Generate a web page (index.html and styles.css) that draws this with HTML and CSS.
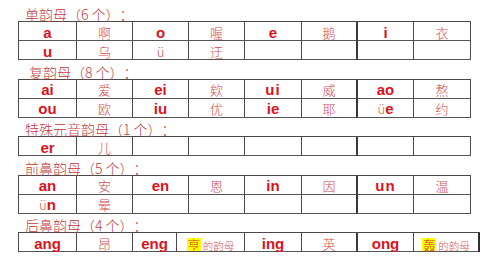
FILE: index.html
```html
<!DOCTYPE html>
<html lang="zh">
<head>
<meta charset="utf-8">
<title>韵母表</title>
<link rel="stylesheet" href="styles.css">
</head>
<body>
<div class="page">
  <section class="group">
    <h2 class="title">单韵母（6 个）：</h2>
    <div class="grid">
      <div class="c py">a</div><div class="c zh">啊</div><div class="c py">o</div><div class="c zh">喔</div><div class="c py">e</div><div class="c zh">鹅</div><div class="c py">i</div><div class="c zh">衣</div>
      <div class="c py">u</div><div class="c zh">乌</div><div class="c zh">ü</div><div class="c zh">迂</div><div class="c"></div><div class="c"></div><div class="c"></div><div class="c"></div>
    </div>
  </section>
  <section class="group">
    <h2 class="title title--shift">复韵母（8 个）：</h2>
    <div class="grid">
      <div class="c py">ai</div><div class="c zh">爱</div><div class="c py">ei</div><div class="c zh">欸</div><div class="c py py--wide">ui</div><div class="c zh">威</div><div class="c py">ao</div><div class="c zh">熬</div>
      <div class="c py">ou</div><div class="c zh">欧</div><div class="c py">iu</div><div class="c zh">优</div><div class="c py">ie</div><div class="c zh">耶</div><div class="c py"><span class="uu">ü</span>e</div><div class="c zh">约</div>
    </div>
  </section>
  <section class="group">
    <h2 class="title">特殊元音韵母（1 个）：</h2>
    <div class="grid">
      <div class="c py">er</div><div class="c zh">儿</div><div class="c"></div><div class="c"></div><div class="c"></div><div class="c"></div><div class="c"></div><div class="c"></div>
    </div>
  </section>
  <section class="group">
    <h2 class="title">前鼻韵母（5 个）：</h2>
    <div class="grid">
      <div class="c py">an</div><div class="c zh">安</div><div class="c py">en</div><div class="c zh">恩</div><div class="c py">in</div><div class="c zh">因</div><div class="c py py--wide">un</div><div class="c zh">温</div>
      <div class="c py"><span class="uu">ü</span>n</div><div class="c zh">晕</div><div class="c"></div><div class="c"></div><div class="c"></div><div class="c"></div><div class="c"></div><div class="c"></div>
    </div>
  </section>
  <section class="group">
    <h2 class="title">后鼻韵母（4 个）：</h2>
    <div class="grid grid--last">
      <div class="c py">ang</div><div class="c zh">昂</div><div class="c py">eng</div><div class="c zh note"><span class="hl">亨</span><span class="small">的韵母</span></div><div class="c py">ing</div><div class="c zh">英</div><div class="c py">ong</div><div class="c zh note"><span class="hl">轰</span><span class="small">的韵母</span></div>
    </div>
  </section>
</div>
</body>
</html>
```
FILE: styles.css
```css
html, body {
  margin: 0;
  padding: 0;
  background: #ffffff;
}

.page {
  padding: 2.5px 0 0 18px;
  display: flex;
  flex-direction: column;
}

.title {
  margin: 0;
  height: 18.5px;
  box-sizing: border-box;
  padding: 5.5px 0 0 7px;
  font-family: "Noto Sans CJK SC", sans-serif;
  font-weight: 300;
  font-size: 14px;
  line-height: 13px;
  color: #c83a3c;
  white-space: pre;
  text-spacing-trim: space-all;
  font-feature-settings: "halt" 0, "palt" 0;
}

.title--shift {
  padding-left: 11px;
}

.grid {
  display: grid;
  grid-template-columns: 58px 56px 56px 56px 57px 56px 56px 57px;
  grid-auto-rows: 19px;
  width: max-content;
  border-top: 1px solid #4a4a4a;
  border-left: 1px solid #4a4a4a;
}

.grid--last {
  grid-template-columns: 58px 56px 44px 68px 57px 56px 56px 66px;
}

.c {
  box-sizing: border-box;
  border-right: 1px solid #4a4a4a;
  border-bottom: 1px solid #555555;
  display: flex;
  align-items: center;
  justify-content: center;
  padding-top: 2px;
  line-height: 15px;
  white-space: nowrap;
}

.grid > .c:nth-child(8n+6) {
  border-right: 2px solid #3a3a3a;
}

.grid--last > .c:nth-child(8n) {
  border-right: 2px solid #2e2e2e;
}

.py {
  font-family: "Liberation Sans", Arial, sans-serif;
  font-weight: 700;
  font-size: 15px;
  color: #dc1220;
}

.py--wide {
  letter-spacing: 1px;
}

.uu {
  font-family: "Noto Sans CJK SC", sans-serif;
  font-weight: 300;
  font-size: 13px;
  color: #d85a5c;
}

.zh {
  font-family: "Noto Sans CJK SC", sans-serif;
  font-weight: 300;
  font-size: 13px;
  color: #d54a4e;
}

.note {
  align-items: flex-end;
  padding-top: 0;
}

.hl {
  display: inline-block;
  background: #ffff00;
  color: #c9333a;
  font-size: 13px;
  line-height: 13px;
  height: 13px;
  width: 14px;
  text-align: center;
}

.small {
  font-size: 10.5px;
  line-height: 11px;
  margin-left: 2px;
  color: #d45a5e;
}
```
